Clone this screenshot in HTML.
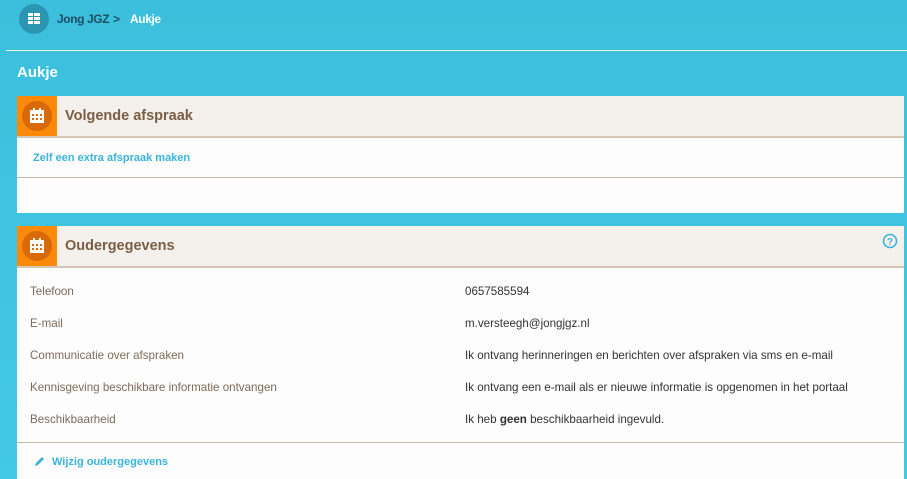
<!DOCTYPE html>
<html><head><meta charset="utf-8"><style>
*{margin:0;padding:0;box-sizing:border-box}
html,body{width:907px;height:479px;overflow:hidden}
body{background:linear-gradient(#3bbfdc,#42c9e5);font-family:"Liberation Sans",sans-serif;position:relative}
.abs{position:absolute}
.circ{left:19px;top:4px;width:30px;height:30px;border-radius:50%;background:#2b95b2}
.bc{top:12px;font-size:12px;font-weight:bold;letter-spacing:-0.4px}
.card{left:17px;width:887px;background:#fdfdfd}
.hd{position:absolute;left:0;top:0;right:0;height:42px;background:#f4f0eb;border-bottom:2px solid #d5c6b6}
.or{position:absolute;left:0;top:0;width:40px;height:40px;background:#fb8a0a}
.oc{position:absolute;left:5px;top:5px;width:30px;height:30px;border-radius:50%;background:#d96a09}
.ht{position:absolute;left:48px;top:12px;font-size:14.5px;font-weight:bold;color:#7a5f45}
.lnk{color:#3ab4da;font-size:11px;font-weight:bold}
.lbl{position:absolute;left:13px;font-size:11.6px;color:#7e6a58}
.val{position:absolute;left:448px;font-size:11.6px;color:#333}
</style></head><body>
<div class="abs circ"><svg width="30" height="30"><g fill="#fff"><rect x="9" y="9" width="5" height="3"/><rect x="15" y="9" width="6" height="3"/><rect x="9" y="13" width="5" height="3"/><rect x="15" y="13" width="6" height="3"/><rect x="9" y="17" width="5" height="3"/><rect x="15" y="17" width="6" height="3"/></g></svg></div>
<div class="abs bc" style="left:57px;color:#1f4f63">Jong JGZ</div>
<div class="abs bc" style="left:113px;color:#1f4f63">&gt;</div>
<div class="abs bc" style="left:130px;color:#fff">Aukje</div>
<div class="abs" style="left:6px;top:50px;width:901px;height:1px;background:#e6f7fb"></div>
<div class="abs" style="left:17px;top:64px;color:#fff;font-size:15px;font-weight:bold">Aukje</div>

<div class="abs card" style="top:96px;height:117px">
<div class="hd"><div class="or"><div class="oc"><svg class="abs" style="left:8px;top:7px" width="14" height="16"><rect x="0" y="2" width="14" height="13" fill="#fff"/><g fill="#d96a09"><rect x="2" y="6" width="2" height="2"/><rect x="6" y="6" width="2" height="2"/><rect x="10" y="6" width="2" height="2"/><rect x="2" y="10" width="2" height="2"/><rect x="6" y="10" width="2" height="2"/><rect x="10" y="10" width="2" height="2"/></g><rect x="3" y="0" width="2" height="3" fill="#fff"/><rect x="9" y="0" width="2" height="3" fill="#fff"/></svg></div></div><div class="ht">Volgende afspraak</div></div>
<div class="abs lnk" style="left:16px;top:56px">Zelf een extra afspraak maken</div>
<div class="abs" style="left:0;right:0;top:81px;height:1px;background:#c9b8a6"></div>
</div>

<div class="abs card" style="top:226px;height:253px">
<div class="hd"><div class="or"><div class="oc"><svg class="abs" style="left:8px;top:7px" width="14" height="16"><rect x="0" y="2" width="14" height="13" fill="#fff"/><g fill="#d96a09"><rect x="2" y="6" width="2" height="2"/><rect x="6" y="6" width="2" height="2"/><rect x="10" y="6" width="2" height="2"/><rect x="2" y="10" width="2" height="2"/><rect x="6" y="10" width="2" height="2"/><rect x="10" y="10" width="2" height="2"/></g><rect x="3" y="0" width="2" height="3" fill="#fff"/><rect x="9" y="0" width="2" height="3" fill="#fff"/></svg></div></div><div class="ht">Oudergegevens</div>
<svg class="abs" style="left:865px;top:7px" width="16" height="16"><circle cx="8" cy="8" r="6.5" fill="none" stroke="#3ab4da" stroke-width="1.6"/><text x="8" y="12" text-anchor="middle" font-size="10" font-weight="bold" fill="#3ab4da" font-family="Liberation Sans">?</text></svg></div>
<div class="lbl" style="top:59px">Telefoon</div><div class="val" style="top:59px">0657585594</div>
<div class="lbl" style="top:91px">E-mail</div><div class="val" style="top:91px">m.versteegh@jongjgz.nl</div>
<div class="lbl" style="top:123px">Communicatie over afspraken</div><div class="val" style="top:123px">Ik ontvang herinneringen en berichten over afspraken via sms en e-mail</div>
<div class="lbl" style="top:155px">Kennisgeving beschikbare informatie ontvangen</div><div class="val" style="top:155px">Ik ontvang een e-mail als er nieuwe informatie is opgenomen in het portaal</div>
<div class="lbl" style="top:187px">Beschikbaarheid</div><div class="val" style="top:187px">Ik heb <b>geen</b> beschikbaarheid ingevuld.</div>
<div class="abs" style="left:0;right:0;top:216px;height:1px;background:#c9b8a6"></div>
<svg class="abs" style="left:16px;top:229px" width="13" height="13"><path d="M2 11 L3 8 L9 2 L11 4 L5 10 Z" fill="#3ab4da"/></svg>
<div class="abs lnk" style="left:35px;top:230px">Wijzig oudergegevens</div>
</div>
</body></html>
